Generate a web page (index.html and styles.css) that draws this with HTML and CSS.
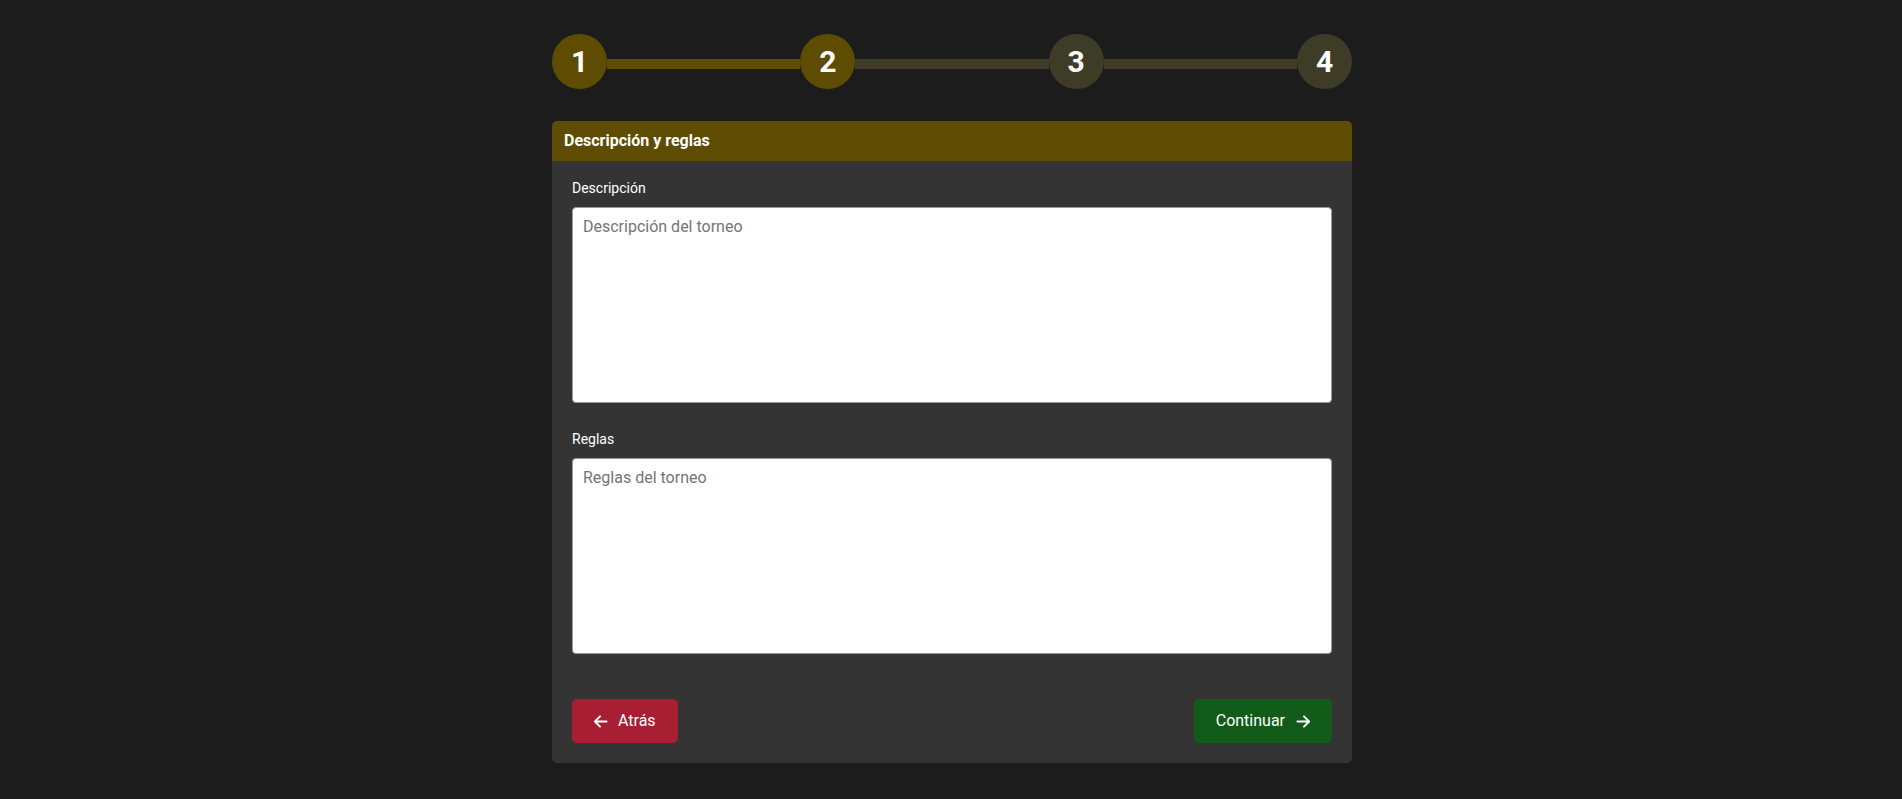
FILE: index.html
```html
<!DOCTYPE html>
<html lang="es">
<head>
<meta charset="utf-8">
<title>Descripción y reglas</title>
<link rel="stylesheet" href="styles.css">
</head>
<body>
<div class="page">
  <div class="stepper">
    <div class="step done">1</div>
    <div class="bar done"></div>
    <div class="step done">2</div>
    <div class="bar"></div>
    <div class="step">3</div>
    <div class="bar"></div>
    <div class="step">4</div>
  </div>

  <div class="card">
    <div class="card-header">Descripción y reglas</div>
    <div class="card-body">
      <div class="group">
        <label class="label" for="desc">Descripción</label>
        <textarea id="desc" class="field" placeholder="Descripción del torneo"></textarea>
      </div>
      <div class="group">
        <label class="label" for="rules">Reglas</label>
        <textarea id="rules" class="field" placeholder="Reglas del torneo"></textarea>
      </div>
      <div class="actions">
        <button class="btn btn-back" type="button">
          <svg class="icon" viewBox="0 0 16 16" width="15" height="15" aria-hidden="true"><path d="M14.5 8H2M7.5 2.5L2 8l5.5 5.5" fill="none" stroke="currentColor" stroke-width="2" stroke-linecap="round" stroke-linejoin="round"/></svg>
          <span>Atrás</span>
        </button>
        <button class="btn btn-next" type="button">
          <span>Continuar</span>
          <svg class="icon" viewBox="0 0 16 16" width="15" height="15" aria-hidden="true"><path d="M1.5 8H14M8.5 2.5L14 8l-5.5 5.5" fill="none" stroke="currentColor" stroke-width="2" stroke-linecap="round" stroke-linejoin="round"/></svg>
        </button>
      </div>
    </div>
  </div>
</div>
</body>
</html>
```

FILE: styles.css
```css
html, body {
  margin: 0;
  padding: 0;
  background: #1c1c1c;
  font-family: Roboto, "Liberation Sans", Arial, sans-serif;
  color: #fff;
  overflow: hidden;
}

.page {
  width: 800px;
  margin-left: calc(50% - 399px);
  padding-top: 34px;
}

.stepper {
  display: flex;
  align-items: flex-start;
  margin-bottom: 32px;
}

.step {
  width: 55px;
  height: 55px;
  border-radius: 50%;
  background: #3e3b27;
  color: #fff;
  font-weight: 700;
  font-size: 30px;
  display: flex;
  align-items: center;
  justify-content: center;
  flex: none;
}

.step.done {
  background: #5e4c02;
}

.bar {
  flex: 1;
  height: 10px;
  margin-top: 25px;
  background: #3e3b27;
}

.bar.done {
  background: #5e4c02;
}

.card {
  background: #343434;
  border-radius: 5px;
  overflow: hidden;
}

.card-header {
  background: #5e4c02;
  font-weight: 700;
  font-size: 16px;
  line-height: 24px;
  padding: 8px 12px;
}

.card-body {
  padding: 17px 20px 20px;
}

.group {
  margin-bottom: 26px;
}

.group + .group {
  margin-bottom: 45px;
}

.label {
  display: block;
  font-size: 14px;
  line-height: 21px;
  margin-bottom: 8px;
  color: #fff;
}

.field {
  display: block;
  width: 100%;
  height: 196px;
  box-sizing: border-box;
  margin: 0;
  padding: 7px 10px;
  border: 1px solid #9a9a9a;
  border-radius: 4px;
  background: #fff;
  color: #212529;
  font-family: Roboto, "Liberation Sans", Arial, sans-serif;
  font-size: 16px;
  line-height: 24px;
  resize: none;
  outline: none;
}

.field::placeholder {
  color: #757575;
  opacity: 1;
}

.actions {
  display: flex;
  justify-content: space-between;
  align-items: center;
}

.btn {
  display: inline-flex;
  align-items: center;
  height: 44px;
  border: none;
  border-radius: 5px;
  color: #fff;
  font-family: Roboto, "Liberation Sans", Arial, sans-serif;
  font-size: 16px;
  line-height: 24px;
  cursor: pointer;
}

.btn-back {
  background: #a81e32;
  padding: 0 22px 0 21px;
  gap: 10px;
}

.btn-next {
  background: #115c19;
  padding: 0 21px 0 22px;
  gap: 11px;
}

.icon {
  display: block;
  flex: none;
}
```
